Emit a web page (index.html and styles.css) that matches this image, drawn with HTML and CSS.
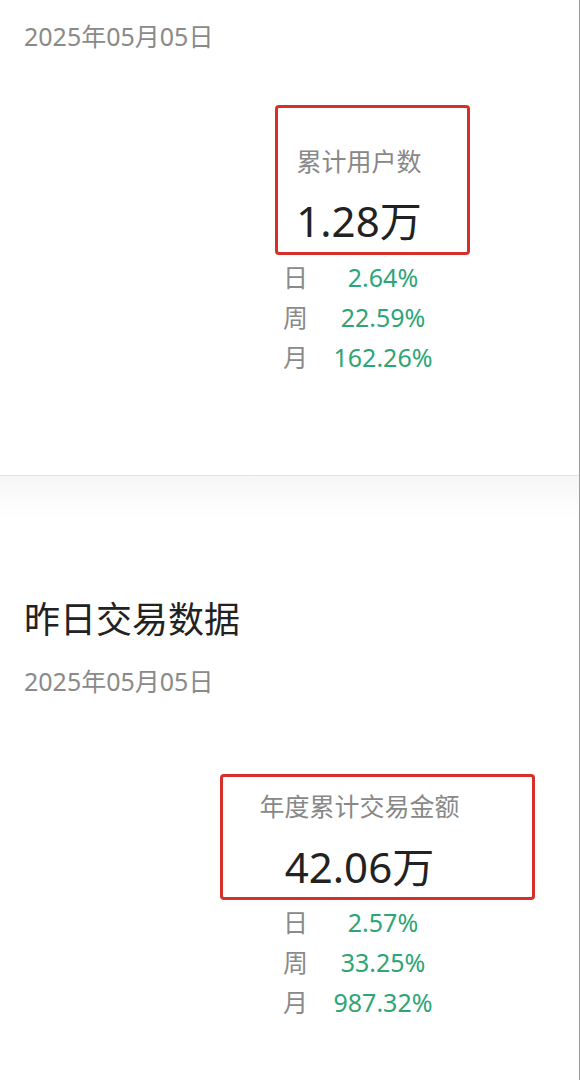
FILE: index.html
```html
<!DOCTYPE html>
<html lang="zh-CN">
<head>
<meta charset="utf-8">
<title>数据</title>
<link rel="stylesheet" href="styles.css">
</head>
<body>
<div class="page">
  <section class="card card-users">
    <div class="date">2025年05月05日</div>
    <div class="stat">
      <div class="hl hl-users">
        <div class="hl-label">累计用户数</div>
        <div class="hl-value">1.28万</div>
      </div>
      <div class="rows">
        <span class="r-label">日</span><span class="r-value">2.64%</span>
        <span class="r-label">周</span><span class="r-value">22.59%</span>
        <span class="r-label">月</span><span class="r-value">162.26%</span>
      </div>
    </div>
  </section>
  <div class="gap"></div>
  <section class="card card-trade">
    <h2 class="title">昨日交易数据</h2>
    <div class="date">2025年05月05日</div>
    <div class="stat">
      <div class="hl hl-trade">
        <div class="hl-label">年度累计交易金额</div>
        <div class="hl-value">42.06万</div>
      </div>
      <div class="rows">
        <span class="r-label">日</span><span class="r-value">2.57%</span>
        <span class="r-label">周</span><span class="r-value">33.25%</span>
        <span class="r-label">月</span><span class="r-value">987.32%</span>
      </div>
    </div>
  </section>
</div>
</body>
</html>
```
FILE: styles.css
```css
html, body {
  margin: 0;
  padding: 0;
  background: #ffffff;
}
body {
  font-family: "Noto Sans", "Noto Sans CJK SC", sans-serif;
  color: #222;
}
.page {
  width: 580px;
  min-height: 1080px;
  box-sizing: border-box;
  border-right: 1px solid #9a9a9a;
  background: #fff;
}
.card {
  padding-left: 24px;
}
.card-users {
  padding-top: 21px;
  height: 476px;
  box-sizing: border-box;
  border-bottom: 1px solid #e2e2e2;
}
.gap {
  height: 44px;
  background: linear-gradient(#f6f6f6, #fcfcfc 60%, #ffffff);
}
.card-trade {
  padding-top: 78px;
}
.title {
  margin: 0 0 24px;
  font-size: 36px;
  font-weight: 400;
  line-height: 44px;
  color: #222;
}
.date {
  font-size: 25px;
  line-height: 30px;
  color: #8a8a8a;
}
.stat {
  margin-left: 196px;
  display: flex;
  flex-direction: column;
  align-items: flex-start;
}
.card-users .stat {
  margin-top: 54px;
}
.card-trade .stat {
  margin-top: 78px;
}
.hl {
  border: 3px solid #d6302a;
  border-radius: 4px;
  text-align: center;
  box-sizing: border-box;
}
.hl-users {
  margin-left: 55px;
  width: 195px;
  padding: 38px 45px 8px 18px;
}
.hl-trade {
  width: 315px;
  padding: 14px 72px 7px 36px;
}
.hl-label {
  font-size: 25px;
  line-height: 30px;
  color: #888;
  white-space: nowrap;
}
.hl-value {
  margin-top: 22px;
  font-size: 42px;
  line-height: 46px;
  color: #222;
  white-space: nowrap;
}
.hl-trade .hl-value {
  margin-top: 23px;
}
.rows {
  margin-top: 7px;
  margin-left: 63px;
  display: grid;
  grid-template-columns: 33px 134px;
  row-gap: 10px;
  font-size: 25px;
  line-height: 30px;
}
.card-trade .rows {
  margin-top: 7px;
}
.r-label {
  color: #8a8a8a;
}
.r-value {
  color: #2ea577;
  text-align: center;
}
```
